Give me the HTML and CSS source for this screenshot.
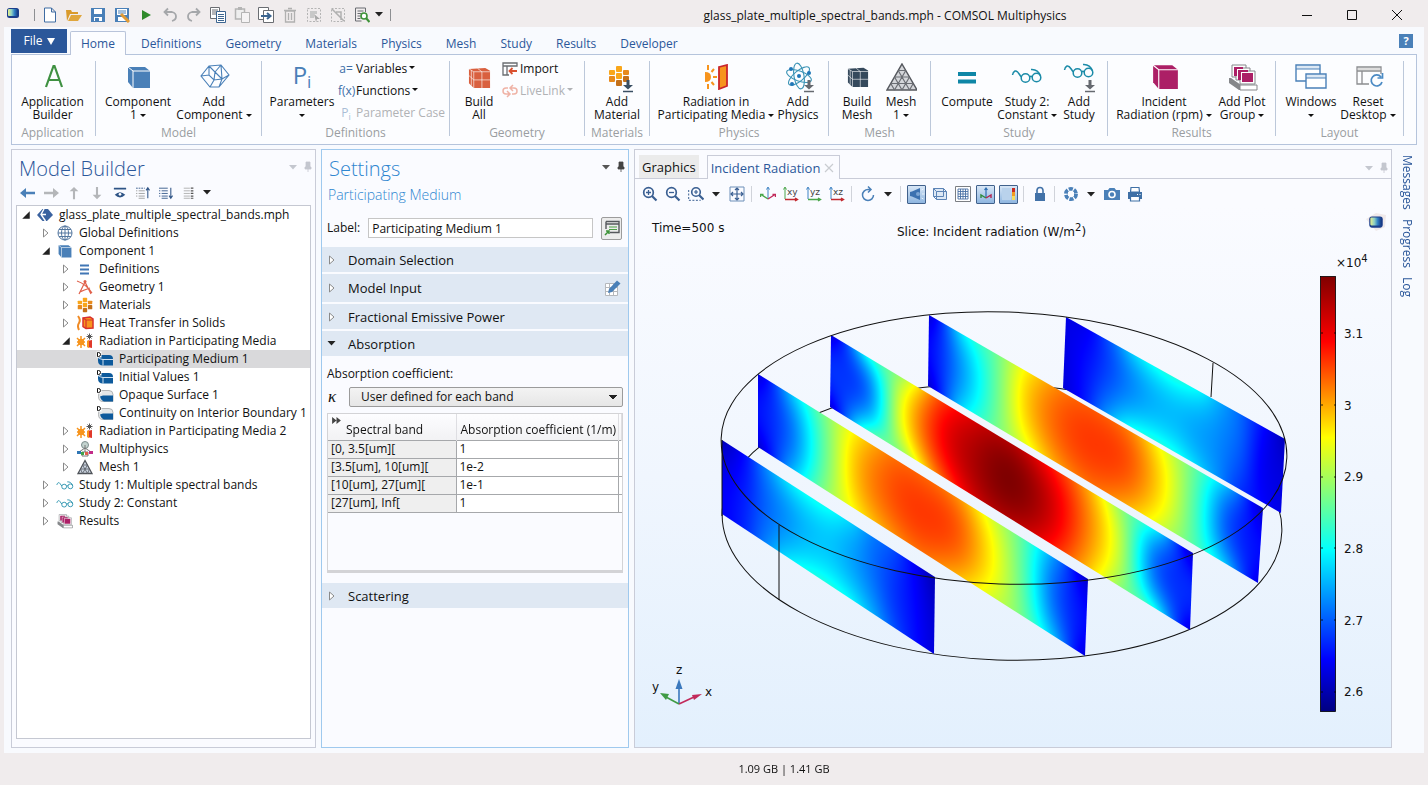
FILE: index.html
```html
<!DOCTYPE html>
<html lang="en">
<head>
<meta charset="utf-8">
<title>glass_plate_multiple_spectral_bands.mph - COMSOL Multiphysics</title>
<link rel="stylesheet" href="styles.css">
</head>
<body>
<svg class="defs" aria-hidden="true">
  <defs>
    <linearGradient id="appfill" x1="0" y1="0" x2="1" y2="0"><stop offset="0" stop-color="#e6f08a"/><stop offset=".35" stop-color="#8fd0c4"/><stop offset=".65" stop-color="#2f7fc4"/><stop offset="1" stop-color="#14357f"/></linearGradient>
    <symbol id="i-app" viewBox="0 0 16 16"><rect x="2" y="3" width="12" height="10" rx="2.500" fill="#1c3f8c"/><rect x="3" y="4" width="10" height="7" rx="1" fill="url(#appfill)"/></symbol>
    <symbol id="i-glasses" viewBox="0 0 32 16"><g fill="none" stroke="#1b8ba8" stroke-width="1.500"><circle cx="14.500" cy="10" r="4.300"/><circle cx="25.500" cy="9.500" r="4.300"/><path d="M10.500 9C8 7 7 2 4 3Q2 4 1.500 7M18.500 9q1.500-1.500 3 0M29.500 8Q27 1 20 1.500"/></g></symbol>
    <symbol id="i-down" viewBox="0 0 12 14"><path d="M4.500 1h3v5H11l-5 4.500L1 6h3.500z" fill="currentColor"/><path d="M1 12.500h10" stroke="currentColor" stroke-width="1.500"/></symbol>
    <symbol id="i-cube" viewBox="0 0 24 24"><path d="M1 2l17-0 5 4v17H6L1 17z" fill="currentColor"/><path d="M1 2l5 4h17M6 6v17" fill="none" stroke="#fff" stroke-width="1"/></symbol>
    <symbol id="i-cubegrid" viewBox="0 0 24 24"><path d="M1 3l17-1 5 3v18H6L1 18z" fill="currentColor"/><path d="M1 3l5 3h17M6 6v17M14.500 23V6L10 2.500M6 14.500h17M6 14.500L1 10M3.500 4.500v16" fill="none" stroke="#fff" stroke-width=".8" opacity=".8"/></symbol>
    <symbol id="i-plots" viewBox="0 0 30 28"><path d="M1 14v5l10 7h18v-5H13l-10-7z" fill="#85878a"/><path d="M12 21h17v5H12z" fill="#fff" stroke="#85878a"/><g stroke="#85878a" fill="#fff"><path d="M4 1h14v12H4z"/><path d="M8 4h14v12H8z"/><path d="M12 7h15v13H12z"/></g><path d="M6 3h9v2H9v7H6zM10 6h10v2h-7v8h-3zM14 9h11v9H14z" fill="#ac1f66"/></symbol>
    <symbol id="i-rad" viewBox="0 0 26 26"><path d="M1 8q6 0 6 5t-6 5z" fill="#f7941d"/><path d="M4 1v5M4 25v-5M10 5L7.500 8M10 21l-2.500-3M9 13h4" stroke="#f7941d" stroke-width="2"/><path d="M15 3l8-2v21l-8 3z" fill="#f7941d" stroke="#c9252c" stroke-width="1.800"/></symbol>
    <symbol id="i-rad2" viewBox="0 0 18 16"><circle cx="5" cy="9" r="3.200" fill="#f7941d"/><path d="M5 3v12M1 5l8 8M1 9h8M1 13l3-3M9 5L6 8" stroke="#f7941d" stroke-width="1.500"/><path d="M11 8l5-1v8l-5-1z" fill="#e0392b"/><path d="M11 8l2-1v8l-2-1z" fill="#f7941d"/><path d="M10.500 3.500h6M13.500 .5v6M11.500 1.500l4 4M15.500 1.500l-4 4" stroke="#555" stroke-width="1"/></symbol>
    <symbol id="i-domain" viewBox="0 0 18 16"><path d="M2 4h11q4 0 4 4v6.500H7q-5 0-5-5z" fill="#0d5a9c"/><path d="M2 6.500q3 2 5 2h10M7 8.500v6" stroke="#cfe0ef" fill="none"/><path d="M.5.500v6h5v-6z" fill="#fff"/><path d="M1.500 1.500v4h1q2 0 2-2t-2-2z" fill="#fff" stroke="#111"/></symbol>
    <symbol id="i-bound" viewBox="0 0 18 16"><path d="M3 3.500h10q4 0 4 4v7H7q-4.500 0-4.500-5z" fill="#e3e6e8" stroke="#9a9c9e" stroke-width=".7"/><path d="M7 8.500h10v6H8q-3-1-4-5z" fill="#0d5a9c"/><path d="M.5.500v6h5v-6z" fill="#fff"/><path d="M1.500 1.500v4h1q2 0 2-2t-2-2z" fill="#fff" stroke="#111"/></symbol>
    <symbol id="i-mesh" viewBox="0 0 32 28"><path d="M16 1L31 27H1z" fill="#d4d6da" stroke="#55585e" stroke-width="1.500"/><path d="M12.200 7.500h7.600M8.500 14h15M4.800 20.500h22.400M12.200 7.500L23.500 27M8.500 14L16 27M4.800 20.500L8.500 27M19.800 7.500L8.500 27M23.500 14L16 27M27.200 20.500L23.500 27" fill="none" stroke="#6b6e74" stroke-width="1.200"/></symbol>
    <symbol id="i-materials" viewBox="0 0 22 22"><g fill="#f9a61a"><rect x="1" y="5" width="6" height="5" rx="1"/><rect x="8" y="1" width="6" height="6" rx="1"/><rect x="8" y="8" width="6" height="6" rx="1"/></g><g fill="#e88a1c"><rect x="1" y="11" width="6" height="6" rx="1"/><rect x="15" y="5" width="6" height="5" rx="1"/></g><g fill="#c4701a"><rect x="8" y="15" width="6" height="6" rx="1"/><rect x="15" y="11" width="6" height="6" rx="1"/></g></symbol>
    <symbol id="i-pin" viewBox="0 0 8 12"><path d="M2 1h4v5h1v2H1V6h1zM4 8v3" fill="currentColor" stroke="currentColor" stroke-width=".8"/></symbol>
    <symbol id="i-closed" viewBox="0 0 8 10"><path d="M1.500 1v8L6 5z" fill="#fff" stroke="#8a8a8a"/></symbol>
    <symbol id="i-opened" viewBox="0 0 8 8"><path d="M7 1v6H1z" fill="#222"/></symbol>
    <symbol id="i-caret" viewBox="0 0 8 5"><path d="M0 0h8L4 4.500z" fill="currentColor"/></symbol>
    <symbol id="i-arrow" viewBox="0 0 16 12"><path d="M15 4.800H6V1L0 6l6 5V7.200h9z" fill="currentColor"/></symbol>
  </defs>
</svg>

<header class="titlebar">
  <div class="quick">
    <svg class="ic16 appicon"><use href="#i-app"/></svg>
    <span class="vsep"></span>
    <button class="qb" aria-label="New"><svg viewBox="0 0 16 16"><path d="M2.500 1h7l4 4v10h-11zM9.500 1v4h4" fill="#fff" stroke="#3f6ca3"/></svg></button>
    <button class="qb" aria-label="Open"><svg viewBox="0 0 16 16"><path d="M0 3h5l1 2h6v2H4l-3 7z" fill="#d99a2b"/><path d="M5 8h11l-4 6H2z" fill="#e0a63c"/></svg></button>
    <button class="qb" aria-label="Save"><svg viewBox="0 0 16 16"><path d="M1 1h14v14H1z" fill="#4a80b8"/><path d="M4 2h8v5H4zM4 10h8v4H4z" fill="#fff"/><path d="M5 11h4v3H5z" fill="#4a80b8"/></svg></button>
    <button class="qb" aria-label="Save As"><svg viewBox="0 0 16 16"><path d="M1 1h14v14H1z" fill="#4a80b8"/><path d="M3 2h10v6H3zM4 10h8v4H4z" fill="#fff"/><path d="M4 4h8M4 6h8" stroke="#4a80b8"/><path d="M7 7l6 6M12 12l3 3" stroke="#e09a35" stroke-width="3"/></svg></button>
    <button class="qb" aria-label="Run"><svg viewBox="0 0 16 16"><path d="M4 3l9 5-9 5z" fill="#2f8a2b"/></svg></button>
    <button class="qb" aria-label="Undo"><svg viewBox="0 0 16 16"><path d="M3 5h7q4 1 4 4.500T10 14M6 1.500L2.500 5 6 8.500" fill="none" stroke="#a5a7aa" stroke-width="1.800"/></svg></button>
    <button class="qb" aria-label="Redo"><svg viewBox="0 0 16 16"><path d="M13 5H6Q2 6 2 9.500T6 14M10 1.500L13.500 5 10 8.500" fill="none" stroke="#a5a7aa" stroke-width="1.800"/></svg></button>
    <button class="qb" aria-label="Copy"><svg viewBox="0 0 16 16"><path d="M.5.500h9v11h-9zM2 3h6M2 5h6M2 7h5" fill="#fff" stroke="#6a6d72"/><path d="M6.500 4.500h9v11h-9z" fill="#fff" stroke="#3c6590"/><path d="M8 7.500h6M8 9.500h6M8 11.500h6M8 13.500h6" stroke="#3c6590"/></svg></button>
    <button class="qb" aria-label="Paste"><svg viewBox="0 0 16 16"><path d="M1.500 2h9v10h-9z" fill="#eee" stroke="#b4b4b4" stroke-width="1.500"/><path d="M4 0h4v3H4z" fill="#b4b4b4"/><path d="M7.500 5.500h8v10h-8z" fill="#f5f3f4" stroke="#b4b4b4"/></svg></button>
    <button class="qb" aria-label="Duplicate"><svg viewBox="0 0 16 16"><path d="M.5.500h10v12H.5z" fill="#fff" stroke="#6a6d72"/><path d="M5.500 3.500h10v12h-10z" fill="#fff" stroke="#6a6d72"/><path d="M3 9h9M9 6l3.500 3L9 12" fill="none" stroke="#3c6590" stroke-width="2"/></svg></button>
    <button class="qb" aria-label="Delete"><svg viewBox="0 0 16 16"><path d="M3.500 4h9v11h-9zM2 3.500h12M6 1.500h4M6.500 6v7M9.500 6v7" fill="none" stroke="#b0b0b0" stroke-width="1.300"/></svg></button>
    <button class="qb" aria-label="Select"><svg viewBox="0 0 16 16"><path d="M1.500 1.500h13v13h-13z" fill="none" stroke="#b4b4b4" stroke-dasharray="2 1.500"/><path d="M4 4h7v3H8v4H4z" fill="#c8c8c8"/><path d="M8 7l6 5h-3l-1 3z" fill="#a8a8a8"/></svg></button>
    <button class="qb" aria-label="Clear selection"><svg viewBox="0 0 16 16"><path d="M1.500 1.500h13v13h-13z" fill="none" stroke="#b4b4b4" stroke-dasharray="2 1.500"/><path d="M2 2l12 12M6 5h5v8" fill="none" stroke="#b0b0b0" stroke-width="1.500"/></svg></button>
    <button class="qb" aria-label="Find"><svg viewBox="0 0 16 16"><path d="M1.500 1v13h6M1.500 1h10v4M3.500 4h6M3.500 6.500h4M3.500 9h3M3.500 11.500h3" fill="none" stroke="#6a6d72"/><circle cx="10" cy="9" r="3" fill="#fff" stroke="#3d9237" stroke-width="1.600"/><path d="M12 11l3.500 4" stroke="#3d9237" stroke-width="2.200"/></svg></button>
    <svg class="caret"><use href="#i-caret"/></svg>
    <span class="vsep"></span>
  </div>
  <h1 class="doc-title">glass_plate_multiple_spectral_bands.mph - COMSOL Multiphysics</h1>
  <div class="winctl">
    <button aria-label="Minimize"><svg viewBox="0 0 12 12"><path d="M1 6.500h10" stroke="#111"/></svg></button>
    <button aria-label="Maximize"><svg viewBox="0 0 12 12"><path d="M1.500 1.500h9v9h-9z" fill="none" stroke="#111"/></svg></button>
    <button aria-label="Close"><svg viewBox="0 0 12 12"><path d="M1 1l10 10M11 1L1 11" stroke="#111"/></svg></button>
  </div>
</header>

<div class="frame">
  <nav class="tabs">
    <button class="file">File <svg class="filecaret" viewBox="0 0 8 7"><path d="M0 0h8L4 7z" fill="currentColor"/></svg></button>
    <button class="tab on">Home</button>
    <button class="tab">Definitions</button>
    <button class="tab">Geometry</button>
    <button class="tab">Materials</button>
    <button class="tab">Physics</button>
    <button class="tab">Mesh</button>
    <button class="tab">Study</button>
    <button class="tab">Results</button>
    <button class="tab">Developer</button>
    <button class="help" aria-label="Help">?</button>
  </nav>

  <section class="ribbon">
    <div class="group g-app">
      <div class="items"><button class="big"><svg viewBox="0 0 32 32"><path d="M9 26L16.500 5h1L25 26M11.500 19h11" fill="none" stroke="#3f9142" stroke-width="2.200"/></svg><span>Application<br>Builder</span></button></div>
      <div class="gname">Application</div>
    </div>
    <div class="group g-model">
      <div class="items">
        <button class="big w76"><svg viewBox="0 0 32 32" class="blue"><use href="#i-cube" x="5" y="4" width="24" height="24"/></svg><span>Component<br>1 <i class="dd"></i></span></button>
        <button class="big w76"><svg viewBox="0 0 32 32"><path d="M11 5l12-1 8 10-10 12-9 0-9-11zM3 15l8-1 5 5 8-1 7-4M11 5l0 9M11 5l6 6-1 8-4 7M17 11l6-7M17 11l7 7-3 8M23 4l1 14" fill="none" stroke="#4a80b8" stroke-width="1.100"/></svg><span>Add<br>Component <i class="dd"></i></span></button>
      </div>
      <div class="gname">Model</div>
    </div>
    <div class="group g-def">
      <div class="items">
        <button class="big w66"><span class="glyph">P<sub>i</sub></span><span>Parameters<br><i class="dd"></i></span></button>
        <div class="smalls">
          <button class="small"><b>a=</b>Variables <i class="dd"></i></button>
          <button class="small"><b>f(x)</b>Functions <i class="dd"></i></button>
          <button class="small" disabled><b>P<sub>i</sub></b>Parameter Case</button>
        </div>
      </div>
      <div class="gname">Definitions</div>
    </div>
    <div class="group g-geom">
      <div class="items">
        <button class="big w40"><svg viewBox="0 0 32 32" class="coral"><use href="#i-cubegrid" x="5" y="5" width="23" height="23"/></svg><span>Build<br>All</span></button>
        <div class="smalls">
          <button class="small"><svg class="ic16" viewBox="0 0 16 14"><path d="M1 1h14v3H1zM1 4v9h6M5 4v9" fill="none" stroke="#6a6d72" stroke-width="1.300"/><path d="M15 9H8M10.500 6L7.500 9l3 3" fill="none" stroke="#d9502f" stroke-width="1.800"/></svg>Import</button>
          <button class="small" disabled><svg class="ic16" viewBox="0 0 16 14"><path d="M6 4H4q-3 0-3 3t3 3h3M5 7l3 3-3 3M10 10h2q3 0 3-3t-3-3H9M11 1L8 4l3 3" fill="none" stroke="#efb3a6" stroke-width="1.500"/></svg>LiveLink <i class="dd"></i></button>
        </div>
      </div>
      <div class="gname">Geometry</div>
    </div>
    <div class="group g-mat">
      <div class="items"><button class="big w64"><svg viewBox="0 0 32 32" class="slate"><use href="#i-materials" x="7" y="4" width="22" height="22"/><use href="#i-down" x="21" y="18" width="12" height="14"/></svg><span>Add<br>Material</span></button></div>
      <div class="gname">Materials</div>
    </div>
    <div class="group g-phys">
      <div class="items">
        <button class="big w124"><svg viewBox="0 0 32 32"><use href="#i-rad" x="4" y="3" width="26" height="26"/></svg><span>Radiation in<br>Participating Media <i class="dd"></i></span></button>
        <button class="big w40"><svg viewBox="0 0 32 32" class="gray"><g fill="none" stroke="#3a93b5" stroke-width="1.100"><ellipse cx="17" cy="15" rx="13" ry="5" transform="rotate(20 17 15)"/><ellipse cx="17" cy="15" rx="13" ry="5" transform="rotate(80 17 15)"/><ellipse cx="17" cy="15" rx="13" ry="5" transform="rotate(140 17 15)"/></g><g fill="#1f76b8"><circle cx="17" cy="15" r="2"/><circle cx="9" cy="8" r="2"/><circle cx="27" cy="12" r="2"/><circle cx="10" cy="23" r="2"/></g><use href="#i-down" x="21" y="18" width="12" height="14"/></svg><span>Add<br>Physics</span></button>
      </div>
      <div class="gname">Physics</div>
    </div>
    <div class="group g-mesh">
      <div class="items">
        <button class="big w44"><svg viewBox="0 0 32 32" class="navy"><use href="#i-cubegrid" x="6" y="5" width="22" height="22"/></svg><span>Build<br>Mesh</span></button>
        <button class="big w44"><svg viewBox="0 0 32 32"><use href="#i-mesh" x="1" y="2" width="32" height="28"/></svg><span>Mesh<br>1 <i class="dd"></i></span></button>
      </div>
      <div class="gname">Mesh</div>
    </div>
    <div class="group g-study">
      <div class="items">
        <button class="big w60"><svg viewBox="0 0 32 32"><path d="M7 13h18M7 20.500h18" stroke="#0e86a6" stroke-width="4"/></svg><span>Compute<br>&nbsp;</span></button>
        <button class="big w60"><svg viewBox="0 0 32 32"><use href="#i-glasses" x="0" y="7" width="32" height="16"/></svg><span>Study 2:<br>Constant <i class="dd"></i></span></button>
        <button class="big w44"><svg viewBox="0 0 32 32" class="gray"><use href="#i-glasses" x="0" y="2" width="32" height="16"/><use href="#i-down" x="21" y="18" width="12" height="14"/></svg><span>Add<br>Study</span></button>
      </div>
      <div class="gname">Study</div>
    </div>
    <div class="group g-res">
      <div class="items">
        <button class="big w112"><svg viewBox="0 0 32 32" class="magenta"><use href="#i-cube" x="4" y="2" width="27" height="27"/></svg><span>Incident<br>Radiation (rpm) <i class="dd"></i></span></button>
        <button class="big w44"><svg viewBox="0 0 32 32"><use href="#i-plots" x="2" y="3" width="30" height="28"/></svg><span>Add Plot<br>Group <i class="dd"></i></span></button>
      </div>
      <div class="gname">Results</div>
    </div>
    <div class="group g-lay">
      <div class="items">
        <button class="big w60"><svg viewBox="0 0 32 32"><path d="M1 4h24v16H1z" fill="#fff" stroke="#4a80b8" stroke-width="1.400"/><path d="M2 5h22v3H2z" fill="#dce8f4"/><path d="M11 13h20v14H11z" fill="#fff" stroke="#4a80b8" stroke-width="1.400"/><path d="M12 14h18v3H12z" fill="#dce8f4"/><path d="M1 8h24M11 17h20" stroke="#4a80b8"/></svg><span>Windows<br><i class="dd"></i></span></button>
        <button class="big w54"><svg viewBox="0 0 32 32"><path d="M5 6h24v4H5zM5 10v13h12M10 10v13M29 10v3" fill="none" stroke="#8b8d90" stroke-width="1.300"/><path d="M6 7h22v2H6z" fill="#ddd"/><path d="M29 16a5.500 5.500 0 1 0 1 5M30.500 12v5h-5" fill="none" stroke="#4a8ac4" stroke-width="1.700"/></svg><span>Reset<br>Desktop <i class="dd"></i></span></button>
      </div>
      <div class="gname">Layout</div>
    </div>
  </section>

  <main class="work">
    <section class="panel builder">
      <header class="phead"><h2>Model Builder</h2><span class="pctl dim"><svg class="caret"><use href="#i-caret"/></svg><svg class="pin"><use href="#i-pin"/></svg></span></header>
      <div class="ptools">
        <button class="blue" aria-label="Back"><svg viewBox="0 0 16 12"><use href="#i-arrow"/></svg></button>
        <button class="lt" aria-label="Forward"><svg viewBox="0 0 16 12"><use href="#i-arrow" transform="rotate(180 8 6)"/></svg></button>
        <button class="lt" aria-label="Up"><svg viewBox="0 0 16 16"><path d="M6.800 15V6H3l5-5 5 5H9.200v9z" fill="currentColor"/></svg></button>
        <button class="lt" aria-label="Down"><svg viewBox="0 0 16 16"><path d="M6.800 1v9H3l5 5 5-5H9.200V1z" fill="currentColor"/></svg></button>
        <button aria-label="Show"><svg viewBox="0 0 16 16"><path d="M1 3h14" stroke="#2f5486" stroke-width="2"/><path d="M2 10q6-6 12 0-6 6-12 0z" fill="#2f5486"/><circle cx="8" cy="9.500" r="1.500" fill="#fff"/></svg></button>
        <button aria-label="Collapse All"><svg viewBox="0 0 16 16"><path d="M0 2.500h10" stroke="#2f5486" stroke-dasharray="2 1"/><path d="M3 5.500h7M3 8.500h7M3 11.500h7M3 14h7M0 5.500h1.500M0 8.500h1.500M0 11.500h1.500" stroke="#999"/><path d="M13.500 14V3M11.500 5l2-3 2 3" fill="none" stroke="#2f5486" stroke-width="1.200"/></svg></button>
        <button aria-label="Expand All"><svg viewBox="0 0 16 16"><path d="M0 2.500h10M3 5.500h7M3 8.500h7M3 11.500h7M3 14h7M0 5.500h1.500M0 8.500h1.500M0 11.500h1.500" stroke="#2f5486"/><path d="M13.500 2v11M11.500 11l2 3 2-3" fill="none" stroke="#2f5486" stroke-width="1.200"/></svg></button>
        <button aria-label="Columns"><svg viewBox="0 0 16 16"><path d="M2 2.500h7M2 5.500h7M2 8.500h7M2 11.500h7M2 14h7" stroke="#aaa"/><path d="M10 2.500h3M10 5.500h3M10 8.500h3M10 11.500h3M10 14h3" stroke="#555" stroke-width="1.400"/></svg></button>
        <svg class="caret"><use href="#i-caret"/></svg>
      </div>
      <ul class="tree" role="tree">
        <li class="l0" role="treeitem"><svg class="tw"><use href="#i-opened"/></svg><svg class="ti" viewBox="0 0 18 16"><path d="M1 8l5.500-6H12l5 6-6 6H6.500z" fill="#3a629f"/><path d="M8 2L5 7.500 9.500 14M5 7.500h5" fill="none" stroke="#fff" stroke-width="1.400"/></svg>glass_plate_multiple_spectral_bands.mph</li>
        <li class="l1" role="treeitem"><svg class="tw"><use href="#i-closed"/></svg><svg class="ti" viewBox="0 0 18 16"><g fill="none" stroke="#54779f"><circle cx="9" cy="8" r="7"/><ellipse cx="9" cy="8" rx="3.500" ry="7"/><path d="M9 1v14M2 8h14M3 4.500h12M3 11.500h12"/></g></svg>Global Definitions</li>
        <li class="l1" role="treeitem"><svg class="tw"><use href="#i-opened"/></svg><svg class="ti blue" viewBox="0 0 18 16"><use href="#i-cube" x="2" y="1" width="14" height="14"/></svg>Component 1</li>
        <li class="l2" role="treeitem"><svg class="tw"><use href="#i-closed"/></svg><svg class="ti" viewBox="0 0 18 16"><path d="M4 4.500h9M4 8.500h9M4 12.500h9" stroke="#4076b5" stroke-width="1.800"/></svg>Definitions</li>
        <li class="l2" role="treeitem"><svg class="tw"><use href="#i-closed"/></svg><svg class="ti" viewBox="0 0 18 16"><path d="M9 3L3 15M9 3l6 12M1 2q9 3 15 12M4 13Q8 11 14 9" fill="none" stroke="#e0604a" stroke-width="1.200"/><circle cx="9" cy="2.500" r="1.500" fill="#e0604a"/></svg>Geometry 1</li>
        <li class="l2" role="treeitem"><svg class="tw"><use href="#i-closed"/></svg><svg class="ti" viewBox="0 0 18 16"><use href="#i-materials" x="1" y="0" width="16" height="16"/></svg>Materials</li>
        <li class="l2" role="treeitem"><svg class="tw"><use href="#i-closed"/></svg><svg class="ti" viewBox="0 0 18 16"><path d="M2 1q3 4 1 7t0 7" fill="none" stroke="#f08a24" stroke-width="2"/><path d="M7 3l7-1 3 2v9l-7 .5-3-2z" fill="#f7941d" stroke="#d9302a" stroke-width="1.500"/><path d="M7 3l3 2h7M10 5v8.500" fill="none" stroke="#d9302a" stroke-width="1.200"/></svg>Heat Transfer in Solids</li>
        <li class="l2" role="treeitem"><svg class="tw"><use href="#i-opened"/></svg><svg class="ti"><use href="#i-rad2"/></svg>Radiation in Participating Media</li>
        <li class="l3 sel" role="treeitem"><svg class="ti"><use href="#i-domain"/></svg>Participating Medium 1</li>
        <li class="l3" role="treeitem"><svg class="ti"><use href="#i-domain"/></svg>Initial Values 1</li>
        <li class="l3" role="treeitem"><svg class="ti"><use href="#i-bound"/></svg>Opaque Surface 1</li>
        <li class="l3" role="treeitem"><svg class="ti"><use href="#i-bound"/></svg>Continuity on Interior Boundary 1</li>
        <li class="l2" role="treeitem"><svg class="tw"><use href="#i-closed"/></svg><svg class="ti"><use href="#i-rad2"/></svg>Radiation in Participating Media 2</li>
        <li class="l2" role="treeitem"><svg class="tw"><use href="#i-closed"/></svg><svg class="ti" viewBox="0 0 18 16"><circle cx="9" cy="4" r="3.500" fill="#c3d3cf" stroke="#7c8d8c"/><path d="M9 4v7M3 11L9 7l6 4M6 15v-4h6v4z" fill="none" stroke="#777"/><path d="M1 10h4v3H1z" fill="#2f76b5"/><path d="M5 11h3v3H5z" fill="#3fa34a"/><path d="M9 11h3v3H9z" fill="#e0604a"/><path d="M13 10h4v3h-4z" fill="#c22b88"/></svg>Multiphysics</li>
        <li class="l2" role="treeitem"><svg class="tw"><use href="#i-closed"/></svg><svg class="ti" viewBox="0 0 18 16"><path d="M9 1.500L16 14.500H2z" fill="#cdd6e2" stroke="#4f5359" stroke-width="1.300"/><path d="M6.500 6h5M4.500 10h9M6.500 6l5 8.500M11.500 6l-5 8.500M4.500 10l2 4.500M13.500 10l-2 4.500" fill="none" stroke="#5d636b" stroke-width=".9"/></svg>Mesh 1</li>
        <li class="l1" role="treeitem"><svg class="tw"><use href="#i-closed"/></svg><svg class="ti" viewBox="0 0 18 16"><use href="#i-glasses" x="0" y="4" width="18" height="9"/></svg>Study 1: Multiple spectral bands</li>
        <li class="l1" role="treeitem"><svg class="tw"><use href="#i-closed"/></svg><svg class="ti" viewBox="0 0 18 16"><use href="#i-glasses" x="0" y="4" width="18" height="9"/></svg>Study 2: Constant</li>
        <li class="l1" role="treeitem"><svg class="tw"><use href="#i-closed"/></svg><svg class="ti" viewBox="0 0 18 16"><use href="#i-plots" x="1" y="1" width="16" height="15"/></svg>Results</li>
      </ul>
    </section>

    <section class="panel settings">
      <header class="phead"><h2>Settings</h2><span class="pctl"><svg class="caret"><use href="#i-caret"/></svg><svg class="pin"><use href="#i-pin"/></svg></span></header>
      <p class="sub">Participating Medium</p>
      <div class="labelrow">
        <label for="lbl">Label:</label>
        <input id="lbl" type="text" value="Participating Medium 1">
        <button class="sq" aria-label="Go to source"><svg viewBox="0 0 16 16"><path d="M2 1.500h13v11H6M2 1.500V9M2 4h13" fill="none" stroke="#55585c" stroke-width="1.400"/><path d="M5 7h8M5 9.500h8" stroke="#4b9e45" stroke-width="1.200"/><path d="M1 15l4-4M2 11h3v3" fill="none" stroke="#3d9237" stroke-width="1.500"/></svg></button>
      </div>
      <button class="sect"><svg class="tw"><use href="#i-closed"/></svg>Domain Selection</button>
      <button class="sect tall"><svg class="tw"><use href="#i-closed"/></svg>Model Input<svg class="edit" viewBox="0 0 16 16"><path d="M.5 3.500h12v12H.5zM.5 7.500h12M.5 11.500h12M4.500 3.500v12M8.500 3.500v12" fill="#fff" stroke="#b5b8bc"/><path d="M3 13l1-4 8-8.500 3.500 3L7 12z" fill="#4a80b8"/></svg></button>
      <button class="sect"><svg class="tw"><use href="#i-closed"/></svg>Fractional Emissive Power</button>
      <button class="sect"><svg class="caret open"><use href="#i-caret"/></svg>Absorption</button>
      <div class="sbody">
        <label for="abs">Absorption coefficient:</label>
        <div class="krow"><span class="kappa">κ</span><select id="abs"><option>User defined for each band</option></select></div>
        <div class="tbox">
          <table>
            <colgroup><col class="c1"><col class="c2"><col></colgroup>
            <thead><tr><th><svg class="ff" viewBox="0 0 10 8"><path d="M0 0l5 4-5 4zM5 0l5 4-5 4z" fill="#444"/></svg>Spectral band</th><th>Absorption coefficient (1/m)</th><th></th></tr></thead>
            <tbody>
              <tr><td>[0, 3.5[um][</td><td>1</td><td></td></tr>
              <tr><td>[3.5[um], 10[um][</td><td>1e-2</td><td></td></tr>
              <tr><td>[10[um], 27[um][</td><td>1e-1</td><td></td></tr>
              <tr><td>[27[um], Inf[</td><td>1</td><td></td></tr>
            </tbody>
          </table>
        </div>
      </div>
      <button class="sect"><svg class="tw"><use href="#i-closed"/></svg>Scattering</button>
    </section>

    <section class="panel graphics">
      <div class="gtabs">
        <button class="gtab">Graphics</button>
        <button class="gtab on">Incident Radiation <svg class="x" viewBox="0 0 10 10"><path d="M1 1l8 8M9 1L1 9" stroke="#c9ccd1" stroke-width="1.200"/></svg></button>
        <span class="pctl dim"><svg class="caret"><use href="#i-caret"/></svg><svg class="pin"><use href="#i-pin"/></svg></span>
      </div>
      <div class="gtools">
        <button aria-label="Zoom In"><svg viewBox="0 0 16 16"><g fill="none" stroke="#3a5f92"><circle cx="6.500" cy="6.500" r="4.800" stroke-width="1.700"/><path d="M10 10l4.500 4.500" stroke-width="2.200"/><path d="M4 6.500h5M6.500 4v5" stroke-width="1.300"/></g></svg></button>
        <button aria-label="Zoom Out"><svg viewBox="0 0 16 16"><g fill="none" stroke="#3a5f92"><circle cx="6.500" cy="6.500" r="4.800" stroke-width="1.700"/><path d="M10 10l4.500 4.500" stroke-width="2.200"/><path d="M4 6.500h5" stroke-width="1.300"/></g></svg></button>
        <button aria-label="Zoom Box"><svg viewBox="0 0 16 16"><g fill="none" stroke="#3a5f92"><path d="M.7 4v10.300h12" stroke-dasharray="2 1.500"/><circle cx="8" cy="6" r="4.300" stroke-width="1.600"/><path d="M11 9l4.500 4.500" stroke-width="2.200"/><path d="M6 6h4M8 4v4" stroke-width="1.200"/></g></svg></button>
        <svg class="caret"><use href="#i-caret"/></svg>
        <button aria-label="Zoom Extents"><svg viewBox="0 0 16 16"><path d="M1 1h14v14H1z" fill="none" stroke="#6d8fb8"/><path d="M8 2v12M2 8h12M6 4l2-2 2 2M6 12l2 2 2-2M4 6L2 8l2 2M12 6l2 2-2 2" fill="none" stroke="#3a5f92" stroke-width="1.200"/></svg></button>
        <span class="gsep"></span>
        <button aria-label="Default View"><svg viewBox="0 0 16 16"><path d="M8 12V2M6.500 3.500L8 1l1.500 2.500" fill="none" stroke="#3f83c4"/><path d="M8 13L1 8.500M.5 11V8.500H3.500" stroke="#4aa64a" stroke-width="1.400" fill="none"/><path d="M8 13l7-4.500M12.500 8.500h3V11" stroke="#c2295a" stroke-width="1.400" fill="none"/></svg></button>
        <button aria-label="XY View"><svg viewBox="0 0 16 16"><path d="M2 2v11M.5 3.500L2 1l1.500 2.500" stroke="#4aa64a" fill="none"/><path d="M2 13.500h12M12 12l2.500 1.500L12 15" stroke="#c2292f" fill="none" stroke-width="1.400"/><text x="4" y="9" class="ax">xy</text></svg></button>
        <button aria-label="YZ View"><svg viewBox="0 0 16 16"><path d="M2 2v11M.5 3.500L2 1l1.500 2.500" stroke="#3f83c4" fill="none"/><path d="M2 13.500h12M12 12l2.500 1.500L12 15" stroke="#4aa64a" fill="none" stroke-width="1.400"/><text x="4" y="9" class="ax">yz</text></svg></button>
        <button aria-label="XZ View"><svg viewBox="0 0 16 16"><path d="M2 2v11M.5 3.500L2 1l1.500 2.500" stroke="#3f83c4" fill="none"/><path d="M2 13.500h12M12 12l2.500 1.500L12 15" stroke="#c2292f" fill="none" stroke-width="1.400"/><text x="4" y="9" class="ax">xz</text></svg></button>
        <span class="gsep"></span>
        <button aria-label="Rotate"><svg viewBox="0 0 16 16"><path d="M13.500 9A5.500 5.500 0 1 1 8 3.500h2.500M8 .5l3 3-3 3" fill="none" stroke="#4a80b8" stroke-width="1.500"/></svg></button>
        <svg class="caret"><use href="#i-caret"/></svg>
        <span class="gsep"></span>
        <button class="act" aria-label="Scene Light"><svg viewBox="0 0 16 16"><path d="M1 6l2-.5L11 2v12l-8-3.500L1 10z" fill="#3b71b0"/><circle cx="9" cy="8" r="2" fill="#7ba5d4"/><path d="M12.500 4l2-1M13 8h2.500M12.500 12l2 1" stroke="#e8f1fa"/></svg></button>
        <button aria-label="Transparency"><svg viewBox="0 0 16 16"><path d="M1.500 2.500h10v8h-10zM4.500 5.500h10v8h-10zM1.500 2.500l3 3M11.500 2.500l3 3M1.500 10.500l3 3" fill="#c9dcee" fill-opacity=".6" stroke="#5b83b5"/></svg></button>
        <button aria-label="Show Grid"><svg viewBox="0 0 16 16"><path d="M.5.500h15v15H.5z" fill="#fff" stroke="#7b7e83"/><path d="M3 3h10v10H3zM5.500 3v10M8 3v10M10.500 3v10M3 5.500h10M3 8h10M3 10.500h10" fill="none" stroke="#4a70a5" stroke-width=".9"/></svg></button>
        <button class="act" aria-label="Show Axis"><svg viewBox="0 0 16 16"><path d="M8 11V2M6.500 4L8 2l1.500 2" stroke="#2c6cb0" fill="none" stroke-width="1.200"/><path d="M8 12L3 9v3" stroke="#2e8a3a" fill="none" stroke-width="1.400"/><path d="M8 12l5-3v3" stroke="#b5224e" fill="none" stroke-width="1.400"/></svg></button>
        <button class="act" aria-label="Show Legends"><svg viewBox="0 0 16 16"><path d="M1 2h9v12H1z" fill="#b9d2ec"/><path d="M11 2h3v4h-3z" fill="#c92a1f"/><path d="M11 6h3v4h-3z" fill="#f39a1e"/><path d="M11 10h3v4h-3z" fill="#f7dc5b"/></svg></button>
        <span class="gsep"></span>
        <button aria-label="Lock"><svg viewBox="0 0 16 16"><path d="M3 7h10v8H3z" fill="#4272a8"/><path d="M5 7V4.500a3 3 0 0 1 6 0V7" fill="none" stroke="#4272a8" stroke-width="1.600"/></svg></button>
        <span class="gsep"></span>
        <button aria-label="Render"><svg viewBox="0 0 16 16"><circle cx="8" cy="8" r="5" fill="none" stroke="#4a80b8" stroke-width="4" stroke-dasharray="4 1.200"/><path d="M8 4.500l3 1.500v4l-3 1.500L5 10V6z" fill="#fafbfe"/></svg></button>
        <svg class="caret"><use href="#i-caret"/></svg>
        <button aria-label="Image Snapshot"><svg viewBox="0 0 16 16"><path d="M0 4h4l1.500-2h5L12 4h4v10H0z" fill="#4a80b8"/><circle cx="8" cy="8.500" r="3" fill="none" stroke="#fff" stroke-width="1.600"/></svg></button>
        <button aria-label="Print"><svg viewBox="0 0 16 16"><path d="M1 6h14v7H1z" fill="#3f70a6"/><path d="M4 1.500h8l.5 4.500h-9zM3.500 10.500h9v4.500h-9z" fill="#fff" stroke="#3f70a6" stroke-width="1.200"/><path d="M10 8.500h1M12.500 8.500h1" stroke="#fff"/></svg></button>
      </div>
      <div class="plot">
        <svg viewBox="0 0 756 541" preserveAspectRatio="xMidYMid meet" role="img" aria-label="Slice plot of incident radiation">
          <defs>
            <linearGradient id="jet" x1="0" y1="0" x2="0" y2="1"><stop offset="0" stop-color="#800000"/><stop offset=".15" stop-color="#f00"/><stop offset=".37" stop-color="#ff0"/><stop offset=".5" stop-color="#80ff80"/><stop offset=".63" stop-color="#0ff"/><stop offset=".88" stop-color="#00f"/><stop offset="1" stop-color="#000080"/></linearGradient>
          </defs>
          <g class="ptext">
            <text x="17" y="26">Time=500 s</text>
            <text x="262" y="30">Slice: Incident radiation (W/m<tspan class="sup" dy="-5">2</tspan><tspan dy="5">)</tspan></text>
            <text x="701" y="61">×10<tspan class="sup" dy="-5">4</tspan></text>
            <text x="709" y="132">3.1</text><text x="709" y="204">3</text><text x="709" y="275">2.9</text><text x="709" y="347">2.8</text><text x="709" y="419">2.7</text><text x="709" y="490">2.6</text>
            <text x="41" y="468">z</text><text x="17" y="485">y</text><text x="70" y="490">x</text>
          </g>
          <rect x="685.500" y="70.500" width="15" height="435" fill="url(#jet)" stroke="#000" stroke-width=".8"/>
          <path d="M686 127h2M699 127h2M686 199h2M699 199h2M686 271h2M699 271h2M686 342h2M699 342h2M686 414h2M699 414h2M686 486h2M699 486h2" stroke="#000" stroke-width=".8"/>
          <g class="edge">
            <ellipse cx="367" cy="316" rx="280" ry="138" transform="rotate(2 367 316)"/>
            <path d="M578 157l-2 34"/>
          </g>
          <foreignObject x="0" y="0" width="756" height="540"><canvas id="slices" width="756" height="540"></canvas></foreignObject>
          <g class="edge">
            <ellipse cx="369" cy="242" rx="283" ry="136" transform="rotate(2 369 242)"/>
            <path d="M87 234v76M144 319v75"/>
          </g>
          <g fill="none" stroke-width="1.600"><path d="M44 498V482" stroke="#3a78bd"/><path d="M44 498l15-7" stroke="#c2295a"/><path d="M44 498l-13-7" stroke="#3f9b45"/></g>
          <path d="M44 473l3.500 10h-7z" fill="#3a78bd"/><path d="M67 488l-8 6-2-5z" fill="#c2295a"/><path d="M25 487l9 1-3 6z" fill="#3f9b45"/>
          <path d="M731 13l10-6 10 2-1 12-9 4z" fill="#efe9ea"/>
          <use href="#i-app" x="732" y="7" width="18" height="18"/>
        </svg>
      </div>
    </section>

    <aside class="rail"><button>Messages</button><button>Progress</button><button>Log</button></aside>
  </main>
</div>
<footer class="status">1.09 GB | 1.41 GB</footer>
<script src="plot.js"></script>
</body>
</html>
```
FILE: styles.css
```css
* { box-sizing: border-box; }
html, body { height: 100%; }
body {
  margin: 0;
  display: flex;
  flex-direction: column;
  background: #f0eced;
  color: #111;
  font: 12px/16px "Open Sans", "Noto Sans", sans-serif;
  overflow: hidden;
}
button, input, select { font: inherit; color: inherit; }
button { border: 0; padding: 0; background: none; display: inline-flex; align-items: center; justify-content: center; white-space: nowrap; }
h1, h2, p, ul { margin: 0; padding: 0; font-weight: 400; }
.defs { position: absolute; width: 0; height: 0; }
.ic16 { width: 16px; height: 16px; }
.caret { width: 8px; height: 5px; flex: none; color: #222; }
.pin { width: 8px; height: 12px; }
.blue { color: #4a80b8; }
.coral { color: #d9603f; }
.slate { color: #3a4f63; }
.gray { color: #666a70; }
.navy { color: #35495c; }
.magenta { color: #ac1f66; }

/* title bar */
.titlebar { display: grid; grid-template-columns: auto 1fr auto; align-items: center; height: 27px; padding: 2px 25px 0 4px; flex: none; }
.quick { display: flex; align-items: center; }
.appicon { margin: 0 13px 4px 1px; }
.vsep { width: 1px; height: 12px; background: #8d8f92; }
.qb { width: 24px; height: 20px; }
.vsep + .qb { margin-left: 3px; }
.qb svg { width: 16px; height: 16px; }
.quick > .caret { margin: 0 7px 0 1px; }
.doc-title { font-size: 12px; line-height: 16px; padding: 2px 0 0 78px; text-align: center; }
.winctl { display: flex; justify-content: flex-end; gap: 33px; }
.winctl svg { width: 12px; height: 12px; }

/* window frame */
.frame { flex: 1; min-height: 0; margin: 0 4px; padding: 0 7px 5px; background: #f8fafe; display: flex; flex-direction: column; }
.tabs { display: flex; align-items: flex-end; height: 28px; flex: none; position: relative; z-index: 1; }
.file { background: #2b579a; color: #fff; width: 56px; height: 24px; align-self: center; gap: 4px; }
.filecaret { width: 8px; height: 7px; color: #fff; }
.tab { height: 24px; padding: 0 11px; color: #2b579a; border: 1px solid transparent; border-bottom: 0; }
.tab.on { background: #fcfdff; border-color: #b9c4da; border-radius: 2px 2px 0 0; margin: 0 3px; padding: 0 10px; }
.help { margin-left: auto; margin-right: 4px; width: 14px; height: 14px; background: #4a80b8; color: #fff; font-weight: 700; font-size: 11px; align-self: center; }

.ribbon { display: flex; flex: none; height: 91px; margin-top: -1px; padding-top: 6px; border: 1px solid #b5c4dc; background: #fcfdff; }
.group { flex: none; height: 75px; border-right: 1px solid #bcc8da; }
.items { display: flex; height: 65px; }
.gname { text-align: center; color: #9a9da1; line-height: 14px; }
.g-app { width: 84px; padding-right: 2px; }
.g-app .big { width: 82px; }
.g-model { width: 166px; } .g-model .items { padding-left: 4px; }
.g-def { width: 188px; } .g-def .items { padding-left: 7px; }
.g-geom { width: 135px; } .g-geom .items { padding-left: 9px; }
.g-mat { width: 65px; }
.g-phys { width: 179px; } .g-phys .items { padding-left: 4px; }
.g-mesh { width: 102px; } .g-mesh .items { padding-left: 6px; }
.g-study { width: 177px; } .g-study .items { padding-left: 6px; }
.g-res { width: 168px; }
.g-lay { width: 128px; } .g-lay .items { padding-left: 5px; }
.big { flex-direction: column; line-height: 13px; justify-content: flex-start; }
.big > svg, .glyph { width: 32px; height: 32px; margin-bottom: 2px; }
.w40 { width: 40px; } .w44 { width: 44px; } .w54 { width: 54px; } .w60 { width: 60px; } .w64 { width: 64px; }
.w66 { width: 66px; } .w76 { width: 76px; } .w112 { width: 112px; } .w124 { width: 124px; }
.dd { display: inline-block; border: 3px solid transparent; border-top-color: currentColor; border-bottom: 0; margin: 0 0 2px; }
.glyph { font-size: 24px; line-height: 28px; color: #4a80b8; }
.glyph sub { font-size: 17px; line-height: 1px; vertical-align: -4px; }
.smalls { display: flex; flex-direction: column; padding-left: 3px; }
.small { height: 22px; padding-bottom: 7px; justify-content: flex-start; gap: 2px; flex: none; }
.small b { width: 16px; color: #3f6fa8; font-weight: 500; font-size: 12px; }
.small b sub { font-size: 9px; line-height: 1px; }
.small:disabled { color: #b0b2b5; }
.small:disabled b { color: #a9bdd6; }

/* panels */
.work { flex: 1; min-height: 0; display: grid; grid-template-columns: 305px 308px minmax(0, 1fr) 20px; column-gap: 5px; margin-top: 4px; }
.panel { border: 1px solid #c9ccd8; background: #fafbff; min-width: 0; min-height: 0; display: flex; flex-direction: column; }
.phead { display: flex; justify-content: space-between; height: 35px; padding: 5px 3px 0 7px; flex: none; }
.phead h2 { font: 300 20px/28px "Open Sans", "Noto Sans", sans-serif; color: #2b579a; }
.pctl { display: flex; align-items: center; gap: 7px; color: #444; }
.phead .pctl { height: 24px; }
.pctl .caret { color: #555; }
.dim, .dim .caret { color: #c4c7cf; }
.ptools { display: flex; align-items: center; height: 15px; padding-left: 4px; flex: none; margin-bottom: 5px; }
.ptools button { width: 23px; height: 16px; }
.ptools svg:not(.caret) { width: 16px; height: 14px; }
.ptools .caret { margin-left: 3px; }
.lt { color: #b4b6b9; }
.tree { list-style: none; flex: 1; margin: 0 4px 8px; border: 1px solid #c5c8d2; background: #fff; overflow: hidden; }
.tree li { display: flex; align-items: center; height: 18px; white-space: nowrap; }
.tw { width: 14px; height: 10px; flex: none; margin-right: 2px; }
.ti { width: 20px; height: 16px; flex: none; margin-right: 4px; }
.l0 { padding-left: 2px; } .l1 { padding-left: 22px; } .l2 { padding-left: 42px; } .l3 { padding-left: 78px; }
.sel { background: #d9d9db; }

.settings { border-color: #9fc9ee; }
.settings .phead h2, .sub { color: #2f86d0; }
.phead + .sub { font: 300 14px/20px "Open Sans", "Noto Sans", sans-serif; padding-left: 6px; }
.labelrow { display: flex; align-items: center; height: 22px; margin: 12px 6px 8px 5px; gap: 8px; flex: none; }
.labelrow input { flex: 1; min-width: 0; height: 20px; border: 1px solid #c6c6c6; background: #fff; padding: 0 3px; }
.sq { width: 21px; height: 23px; border: 1px solid #9c9c9c; border-radius: 2px; background: #ececec; }
.sq svg { width: 16px; height: 16px; }
.sect { height: 25px; flex: none; justify-content: flex-start; background: #dfe8f3; margin-bottom: 2px; padding: 0 7px 0 3px; font-size: 13px; line-height: 20px; }
.sect.tall { height: 28px; }
.sect .tw { margin-right: 9px; }
.sect .open { margin: 0 12px 0 2px; width: 9px; }
.edit { width: 16px; height: 16px; margin-left: auto; }
.sbody { padding: 6px 5px 10px; }
.sbody > label { display: block; line-height: 20px; }
.krow { display: flex; align-items: center; height: 20px; margin-top: 3px; }
.kappa { width: 22px; font: italic 17px/18px "Liberation Serif", serif; padding-left: 1px; }
.krow select { flex: 1; height: 20px; border: 1px solid #9b9b9b; border-radius: 2px; padding: 0 11px; appearance: none;
  background: linear-gradient(45deg, transparent 50%, #222 50%) right 9px center / 4px 4px no-repeat, linear-gradient(-45deg, transparent 50%, #222 50%) right 5px center / 4px 4px no-repeat, linear-gradient(#f3f3f3, #e6e6e6); }
.tbox { margin-top: 6px; height: 160px; border: 1px solid #d3d3d6; border-bottom-width: 3px; }
table { width: 100%; border-collapse: collapse; table-layout: fixed; }
.c1 { width: 128px; } .c2 { width: 162px; }
th { position: relative; height: 26px; padding: 6px 0 0 4px; font-weight: 400; text-align: left; line-height: 18px; background: linear-gradient(#fdfdff, #f2f2f4); border-right: 1px solid #dedee2; white-space: nowrap; }
th:first-child { padding-left: 18px; }
.ff { position: absolute; left: 4px; top: 3px; width: 9px; height: 7px; }
td { height: 18px; line-height: 16px; padding: 0 3px; border: 1px solid #a6a8ab; border-left: 0; background: #fff; white-space: nowrap; }
td:first-child { background: #efefef; }
td:last-child { border-right: 0; }

/* graphics */
.gtabs { display: flex; height: 29px; padding: 5px 3px 0 4px; border-bottom: 1px solid #c9ccd8; flex: none; }
.gtab { height: 23px; padding: 0 3px; font-size: 13px; background: #ebebeb; }
.gtab.on { height: 24px; margin-left: 8px; padding: 0 5px 0 3px; gap: 4px; background: #fafbff; border: 1px solid #c9ccd8; border-bottom: 0; color: #2b579a; }
.x { width: 10px; height: 10px; }
.gtabs .pctl { margin-left: auto; height: 26px; }
.gtools { display: flex; align-items: center; height: 27px; padding: 3px 0 0 3px; flex: none; }
.gtools button { width: 23px; height: 19px; }
.gtools svg:not(.caret) { width: 16px; height: 16px; }
.gtools .caret { margin: 0 5px; }
.gsep { width: 1px; height: 16px; background: #d0d3da; margin: 0 4px 0 3px; }
.gtools .act { width: 19px; margin: 0 2px; border: 1px solid #41618c; background: linear-gradient(#d7e6f6, #8fb6e0); border-radius: 1px; }
.ax { font: 9px "DejaVu Sans", sans-serif; fill: #444; }
.plot { flex: 1; min-height: 0; background: linear-gradient(#fafbff, #f0f6fe 50%, #e3f0fd); }
.plot > svg { display: block; width: 100%; height: 100%; }
.plot canvas { display: block; }
.ptext { font: 12px "DejaVu Sans", sans-serif; fill: #111; }
.sup { font-size: 10px; }
.edge { fill: none; stroke: #111; stroke-width: 1; }
.rail { display: flex; flex-direction: column; align-items: center; gap: 9px; padding-top: 6px; }
.rail button { writing-mode: vertical-rl; color: #2b579a; }
.status { flex: none; height: 32px; line-height: 32px; text-align: center; padding-left: 140px; font-size: 11px; }
```
FILE: plot.js
```js
// Each slice: corners [TL, TR, BR, BL] and normalised field samples along
// the slice at its top edge, mid height and bottom edge.
const slices = [
  { q: [[431, 111], [650, 233], [646, 307], [428, 182]], f: [
    [.10, .12, .21, .32, .38, .40, .37, .29, .22, .13, .06],
    [.10, .14, .20, .26, .30, .31, .29, .26, .21, .12, .09],
    [.09, .15, .27, .37, .40, .39, .34, .27, .18, .13, .10]] },
  { q: [[294, 109], [628, 302], [623, 377], [293, 180]], f: [
    [.09, .35, .48, .65, .76, .79, .75, .61, .46, .28, .07],
    [.13, .28, .47, .68, .79, .82, .79, .65, .45, .21, .13],
    [.08, .33, .48, .61, .73, .77, .71, .59, .46, .31, .10]] },
  { q: [[196, 129], [558, 347], [555, 424], [195, 201]], f: [
    [.09, .37, .55, .81, .92, .95, .87, .73, .52, .34, .07],
    [.17, .24, .62, .86, .96, 1.0, .93, .77, .56, .23, .16],
    [.09, .41, .53, .77, .92, .95, .88, .72, .52, .38, .09]] },
  { q: [[123, 168], [453, 373], [450, 450], [123, 241]], f: [
    [.09, .31, .49, .65, .76, .78, .74, .60, .46, .26, .07],
    [.14, .24, .47, .69, .79, .82, .79, .65, .47, .23, .13],
    [.08, .29, .50, .64, .73, .77, .71, .60, .49, .31, .09]] },
  { q: [[87, 234], [300, 371], [299, 448], [87, 308]], f: [
    [.06, .13, .25, .34, .38, .38, .33, .25, .20, .12, .05],
    [.11, .15, .22, .27, .31, .32, .29, .24, .18, .13, .08],
    [.12, .16, .25, .34, .39, .40, .37, .30, .21, .14, .09]] }
];

function cubic(row, u) {
  const n = row.length - 1;
  const s = Math.min(Math.max(u, 0), 1) * n;
  const i = Math.min(Math.floor(s), n - 1);
  const t = s - i;
  const at = k => row[Math.min(Math.max(k, 0), n)];
  const a = at(i - 1), b = at(i), c = at(i + 1), d = at(i + 2);
  return b + t * ((c - a) + t * ((2 * a - 5 * b + 4 * c - d) + t * (3 * b - a - 3 * c + d))) / 2;
}

function field(f, u, v) {
  const w = Math.min(Math.max(v, 0), 1);
  const a = cubic(f[0], u), b = cubic(f[1], u), c = cubic(f[2], u);
  return a * (1 - w) * (1 - 2 * w) + b * 4 * w * (1 - w) + c * w * (2 * w - 1);
}

function jet(t) {
  const ch = m => 255 * Math.min(Math.max(1.5 - Math.abs(4 * t - m), 0), 1);
  return [ch(3), ch(2), ch(1)];
}

function drawSlice(ctx, { q, f }) {
  const [tl, tr, br, bl] = q;
  const w = ctx.canvas.width, h = ctx.canvas.height;
  const tmp = document.createElement("canvas");
  tmp.width = w;
  tmp.height = h;
  const tctx = tmp.getContext("2d");
  const img = tctx.createImageData(w, h);
  for (let x = bl[0] - 2; x < tr[0] + 3; x++) {
    for (let y = tl[1] - 3; y < br[1] + 3; y++) {
      let u = 0, v = .5;
      for (let k = 0; k < 3; k++) {
        const x0 = tl[0] + (bl[0] - tl[0]) * v, x1 = tr[0] + (br[0] - tr[0]) * v;
        u = (x - x0) / (x1 - x0);
        const y0 = tl[1] + (tr[1] - tl[1]) * u, y1 = bl[1] + (br[1] - bl[1]) * u;
        v = (y - y0) / (y1 - y0);
      }
      if (v < -.1 || v > 1.1) continue;
      const p = 4 * (y * w + x);
      const c = jet(field(f, u, v));
      img.data[p] = c[0];
      img.data[p + 1] = c[1];
      img.data[p + 2] = c[2];
      img.data[p + 3] = 255;
    }
  }
  tctx.putImageData(img, 0, 0);
  ctx.save();
  ctx.beginPath();
  q.forEach(([x, y]) => ctx.lineTo(x, y));
  ctx.clip();
  ctx.drawImage(tmp, 0, 0);
  ctx.restore();
}

const ctx = document.getElementById("slices").getContext("2d");
slices.forEach(s => drawSlice(ctx, s));
```
